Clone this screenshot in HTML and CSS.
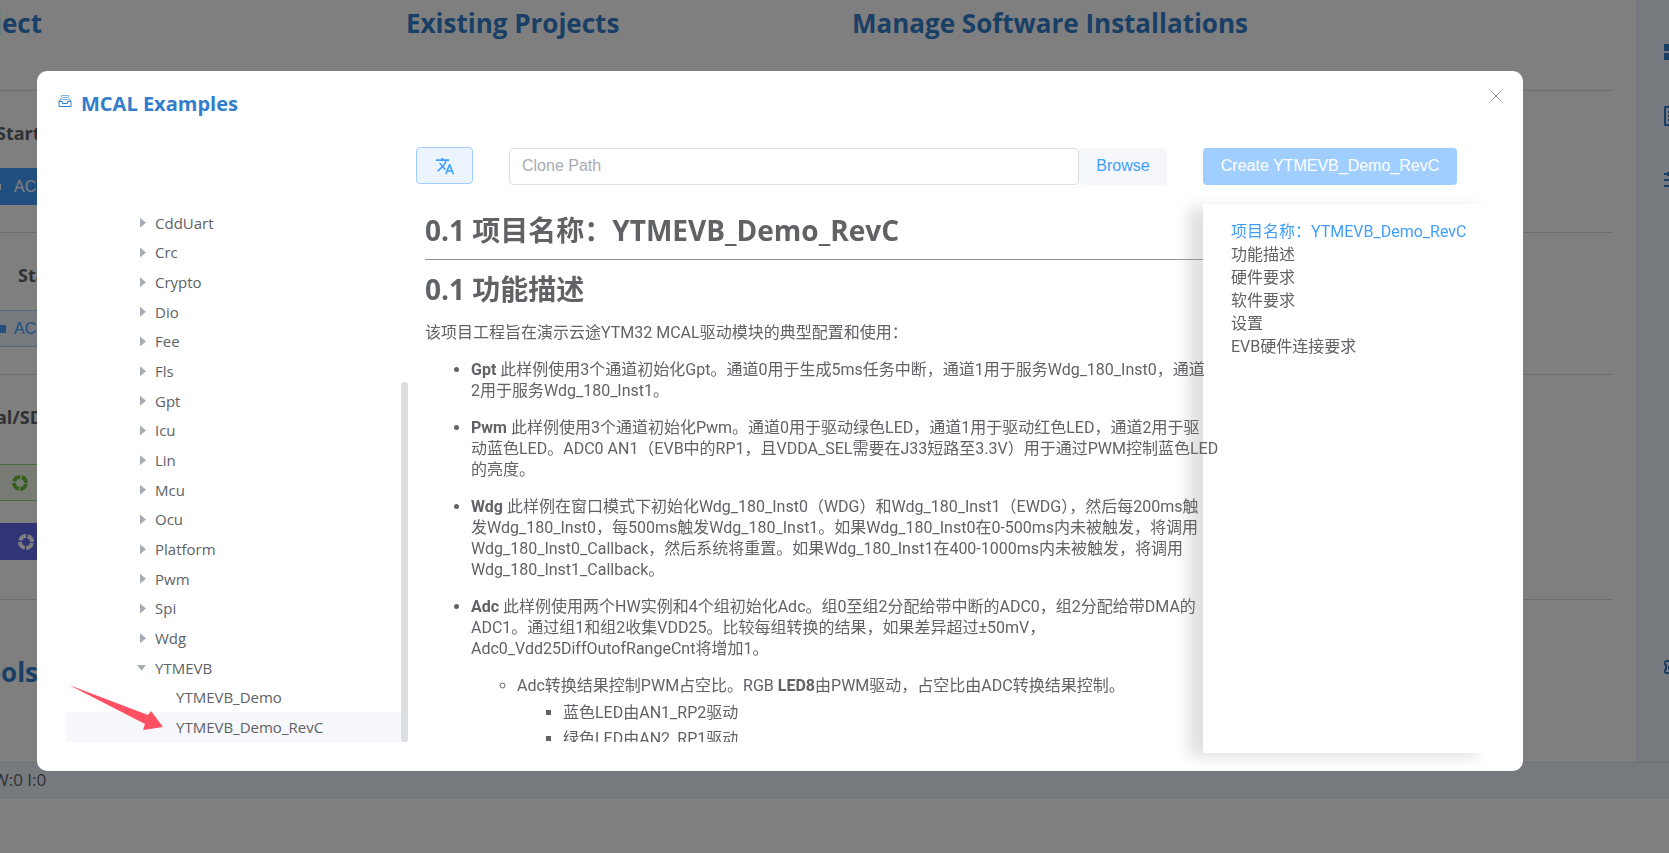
FILE: index.html
```html
<!DOCTYPE html>
<html lang="zh-CN">
<head>
<meta charset="utf-8">
<title>MCAL Examples</title>
<link rel="stylesheet" href="styles.css">
</head>
<body>
<div class="shell">
  <main class="home">
    <header class="home-head">
      <h2 class="col-new">Project</h2>
      <h2 class="col-existing">Existing Projects</h2>
      <h2 class="col-manage">Manage Software Installations</h2>
    </header>
    <section class="block">
      <h3 class="block-title">Start</h3>
      <button class="launch launch-primary" type="button"><span class="chip chip-small"></span>AC</button>
    </section>
    <section class="block">
      <h3 class="block-title indent">Start</h3>
      <button class="launch launch-plain" type="button"><span class="chip"></span>AC</button>
    </section>
    <section class="block block-tall">
      <h3 class="block-title">al/SDK</h3>
      <button class="launch launch-green" type="button" aria-label="Help">
        <svg class="ring" viewBox="0 0 16 16"><circle cx="8" cy="8" r="6"/></svg>
      </button>
      <button class="launch launch-purple" type="button" aria-label="Support">
        <svg class="ring" viewBox="0 0 16 16"><circle cx="8" cy="8" r="6"/></svg>
      </button>
    </section>
    <h2 class="tools">Tools</h2>
  </main>
  <aside class="rail">
    <svg class="rail-icon" viewBox="0 0 20 20"><path class="solid" d="M0 2h8v7H0zM0 11h8v7H0zM11 2h8v7h-8zM11 11h8v7h-8z"/></svg>
    <svg class="rail-icon" viewBox="0 0 20 20"><path d="M1 1h18v18H1zM4 6h12M4 10h12M4 14h12"/></svg>
    <svg class="rail-icon" viewBox="0 0 20 20"><path d="M0 4h20M0 10h20M0 16h20M4 2v4"/></svg>
    <svg class="rail-icon last" viewBox="0 0 20 20"><path d="M2 4h14v3l-2 3 2 3v3H2q-3-2 0-4v-4q-3-2 0-4M5 9v3"/></svg>
  </aside>
  <footer class="status">W:0 I:0</footer>
</div>

<div class="overlay">
  <section class="dialog" role="dialog" aria-labelledby="dialog-title">
    <header class="dialog-head">
      <svg class="box-icon" viewBox="0 0 14 14"><path d="M1 7.500h3.500v2h5v-2H13V12.500H1zM1 7.500 3 4.500M13 7.500 11 4.500"/><path class="faint" d="M3.500 3.500V1.500h7v2M3.500 5.500h7M4 3.500h6"/></svg>
      <h1 class="dialog-title" id="dialog-title">MCAL Examples</h1>
      <button class="close" type="button" aria-label="Close">
        <svg viewBox="0 0 12 12"><path d="M.5.5l11 11M11.500.5l-11 11"/></svg>
      </button>
    </header>

    <div class="toolbar">
      <button class="translate" type="button" aria-label="Translate">
        <svg viewBox="0 0 24 24"><path d="M12.870 15.070l-2.540-2.510.03-.03A17.520 17.520 0 0 0 14.070 6H17V4h-7V2H8v2H1v2h11.170C11.500 7.920 10.440 9.750 9 11.350 8.070 10.320 7.300 9.190 6.690 8h-2c.73 1.630 1.730 3.170 2.980 4.560l-5.090 5.020L4 19l5-5 3.110 3.110.76-2.040zM18.500 10h-2L12 22h2l1.120-3h4.750L21 22h2l-4.500-12zm-2.620 7l1.620-4.330L19.120 17h-3.240z"/></svg>
      </button>
      <div class="path-group">
        <input class="path" type="text" placeholder="Clone Path" aria-label="Clone Path">
        <button class="browse" type="button">Browse</button>
      </div>
      <button class="create" type="button">Create YTMEVB_Demo_RevC</button>
    </div>

    <div class="panes">
      <nav class="tree" aria-label="Examples">
        <ul class="tree-list">
          <li class="node">CddUart</li>
          <li class="node">Crc</li>
          <li class="node">Crypto</li>
          <li class="node">Dio</li>
          <li class="node">Fee</li>
          <li class="node">Fls</li>
          <li class="node">Gpt</li>
          <li class="node">Icu</li>
          <li class="node">Lin</li>
          <li class="node">Mcu</li>
          <li class="node">Ocu</li>
          <li class="node">Platform</li>
          <li class="node">Pwm</li>
          <li class="node">Spi</li>
          <li class="node">Wdg</li>
          <li class="node open">YTMEVB</li>
          <li class="node leaf">YTMEVB_Demo</li>
          <li class="node leaf selected">YTMEVB_Demo_RevC</li>
        </ul>
        <span class="thumb"></span>
        <svg class="pointer" viewBox="0 0 94 46"><path d="M0 0 79 30 82 26 94 42 74 45 76 39Z"/></svg>
      </nav>

      <article class="doc">
        <h2 class="doc-title">0.1 项目名称：YTMEVB_Demo_RevC</h2>
        <hr class="rule">
        <h2 class="doc-title">0.1 功能描述</h2>
        <p class="lead">该项目工程旨在演示云途YTM32 MCAL驱动模块的典型配置和使用：</p>
        <ul class="points">
          <li><strong>Gpt</strong> 此样例使用3个通道初始化Gpt。通道0用于生成5ms任务中断，通道1用于服务Wdg_180_Inst0，通道<br>2用于服务Wdg_180_Inst1。</li>
          <li><strong>Pwm</strong> 此样例使用3个通道初始化Pwm。通道0用于驱动绿色LED，通道1用于驱动红色LED，通道2用于驱<br>动蓝色LED。ADC0 AN1（EVB中的RP1，且VDDA_SEL需要在J33短路至3.3V）用于通过PWM控制蓝色LED<br>的亮度。</li>
          <li><strong>Wdg</strong> 此样例在窗口模式下初始化Wdg_180_Inst0（WDG）和Wdg_180_Inst1（EWDG），然后每200ms触<br>发Wdg_180_Inst0，每500ms触发Wdg_180_Inst1。如果Wdg_180_Inst0在0-500ms内未被触发，将调用<br>Wdg_180_Inst0_Callback，然后系统将重置。如果Wdg_180_Inst1在400-1000ms内未被触发，将调用<br>Wdg_180_Inst1_Callback。</li>
          <li><strong>Adc</strong> 此样例使用两个HW实例和4个组初始化Adc。组0至组2分配给带中断的ADC0，组2分配给带DMA的<br>ADC1。通过组1和组2收集VDD25。比较每组转换的结果，如果差异超过±50mV，<br>Adc0_Vdd25DiffOutofRangeCnt将增加1。
            <ul class="sub">
              <li>Adc转换结果控制PWM占空比。RGB <strong>LED8</strong>由PWM驱动，占空比由ADC转换结果控制。
                <ul class="subsub">
                  <li>蓝色LED由AN1_RP2驱动</li>
                  <li>绿色LED由AN2_RP1驱动</li>
                </ul>
              </li>
            </ul>
          </li>
        </ul>
      </article>

      <nav class="toc" aria-label="目录">
        <a class="toc-link current" href="#p1">项目名称：YTMEVB_Demo_RevC</a>
        <a class="toc-link" href="#p2">功能描述</a>
        <a class="toc-link" href="#p3">硬件要求</a>
        <a class="toc-link" href="#p4">软件要求</a>
        <a class="toc-link" href="#p5">设置</a>
        <a class="toc-link" href="#p6">EVB硬件连接要求</a>
      </nav>
    </div>
  </section>
</div>
</body>
</html>
```
FILE: styles.css
```css
* { box-sizing: border-box; }

body {
  margin: 0;
  height: 100vh;
  overflow: hidden;
  background: #fff;
  color: #606266;
  font-family: "Open Sans", "Noto Sans CJK SC", sans-serif;
  font-size: 15px;
}

h1, h2, h3, p, ul { margin: 0; padding: 0; }
button, input { font-family: "Liberation Sans", sans-serif; font-size: 16px; }
button { cursor: pointer; }

/* Page behind the dialog */
.shell {
  display: grid;
  height: 100vh;
  grid-template-columns: 1fr 33px;
  grid-template-rows: 1fr 36px;
  padding-bottom: 55px;
}
.home { min-width: 0; overflow: hidden; }
.home h2 { color: #337ecc; font-size: 26px; line-height: 46px; white-space: nowrap; }
.home-head {
  display: flex;
  height: 91px;
  margin-right: 23px;
  border-bottom: 1px solid #dcdfe6;
}
.col-new, .tools { display: flex; justify-content: flex-end; }
.col-new { flex: 0 0 42px; min-width: 0; }
.col-existing { flex: 0 0 446px; margin-left: 364px; }
.block {
  height: 142px;
  margin-right: 23px;
  padding-top: 28px;
  border-bottom: 1px solid #dcdfe6;
}
.block-tall { height: 225px; }
.block-title { margin-left: -4px; font-size: 18px; line-height: 28px; }
.indent { margin-left: 18px; }
.launch {
  display: flex;
  width: 160px;
  height: 37px;
  margin-top: 21px;
  padding: 0;
  align-items: center;
  border: 0;
}
.launch-primary { gap: 13px; background: #409eff; color: #fff; }
.launch-plain { gap: 8px; border: 1px solid #a0cfff; border-left: 0; background: #ecf5ff; color: #409eff; }
.chip { width: 6px; height: 8px; background: #409eff; }
.chip-small { width: 1px; height: 6px; background: #fff; }
.launch-green { padding: 0 12px; margin-top: 33px; border: 1px solid #95d475; border-left: 0; background: #f0f9eb; color: #67c23a; }
.launch-purple { padding: 0 18px; margin-top: 22px; background: #626aef; color: #fff; }
.ring { width: 16px; height: 16px; fill: none; stroke: currentColor; stroke-width: 4; stroke-dasharray: 8 1.420; stroke-dashoffset: -1; }
.home .tools { width: 38px; margin-top: 49px; }

.rail { display: flex; flex-direction: column; gap: 44px; padding: 42px 0 50px 28px; overflow: hidden; background: #ecf5ff; }
.rail-icon { flex: none; width: 20px; height: 20px; fill: none; stroke: #337ecc; stroke-width: 2; }
.rail-icon .solid { fill: #337ecc; stroke: none; }
.last { margin-top: auto; margin-bottom: 35px; }

.status {
  grid-column: 1 / -1;
  border: solid #dcdfe6;
  border-width: 1px 0;
  background: #ecf5ff;
  font-size: 17px;
  line-height: 34px;
  text-indent: -7px;
}

/* Dialog */
.overlay {
  position: fixed;
  inset: 0;
  display: flex;
  padding: 71px 146px 82px 37px;
  background: rgba(0, 0, 0, .5);
}
.dialog {
  display: flex;
  flex: 1;
  min-width: 0;
  flex-direction: column;
  border-radius: 10px;
  background: #fff;
}
.dialog-head { display: flex; height: 76px; padding: 18px 20px 0 21px; align-items: flex-start; }
.box-icon { width: 14px; height: 14px; margin: 5px 9px 0 0; fill: none; stroke: #337ecc; }
.faint { opacity: .6; }
.dialog-title { color: #337ecc; font-size: 20px; line-height: 30px; }
.close { width: 14px; height: 14px; margin: 0 0 0 auto; padding: 1px; border: 0; background: none; }
.close svg { display: block; width: 12px; height: 12px; fill: none; stroke: #909399; }

.toolbar { display: flex; padding: 0 66px 0 379px; }
.translate {
  display: grid;
  width: 57px;
  height: 37px;
  padding: 0;
  place-items: center;
  border: 1px solid #a0cfff;
  border-radius: 4px;
  background: #ecf5ff;
}
.translate svg { width: 22px; height: 20px; fill: #409eff; }
.path-group { display: flex; flex: 1; margin: 1px 36px 0; }
.path {
  flex: 1;
  min-width: 0;
  height: 37px;
  padding: 0 12px 2px;
  border: 1px solid #dcdfe6;
  border-radius: 4px;
}
.path::placeholder { color: #a8abb2; }
.browse { width: 88px; padding: 0 0 2px; border: 0; border-radius: 4px; background: #f5f7fa; color: #409eff; }
.create { width: 254px; height: 37px; margin-top: 1px; padding: 0 0 2px; border: 0; border-radius: 4px; background: #a0cfff; color: #fff; }

.panes { display: flex; flex: 1; min-height: 0; padding: 19px 30px 18px 29px; }

.tree { position: relative; display: flex; flex: 0 0 342px; margin: 4px 0 11px; }
.tree-list { display: grid; flex: 1; grid-auto-rows: 1fr; list-style: none; }
.node { display: flex; align-items: center; padding-left: 74px; }
.node::before {
  content: "";
  width: 6px;
  height: 10px;
  margin-right: 9px;
  background: #a8abb2;
  clip-path: polygon(0 0, 100% 50%, 0 100%);
}
.open { padding-left: 71px; }
.open::before { width: 9px; height: 6px; clip-path: polygon(0 0, 100% 0, 50% 100%); }
.leaf { padding-left: 110px; }
.leaf::before { display: none; }
.selected { background: #f5f7fa; }
.thumb { position: absolute; right: 0; bottom: 0; width: 7px; height: 360px; border-radius: 4px; background: #dddee0; }
.pointer { position: absolute; left: 3px; bottom: 11px; width: 94px; height: 46px; fill: #ff5161; }

.doc, .toc { font-family: Roboto, "Noto Sans CJK SC", sans-serif; font-size: 16px; white-space: nowrap; }
/* The text runs over the shadow of the contents panel */
.doc { position: relative; z-index: 1; flex: 1; min-width: 0; margin: 5px -16px 11px 17px; overflow: hidden; line-height: 21px; }
.doc-title { font-family: "Open Sans", "Noto Sans CJK SC", sans-serif; font-size: 28px; line-height: 42px; }
.rule { margin: 8px 16px 8px 0; border: 0; border-top: 1px solid #909399; }
.lead { margin-top: 12px; }
.points { margin-top: 16px; padding-left: 46px; }
.points > li { margin-bottom: 16px; }
.sub { margin-top: 16px; padding-left: 46px; }
.subsub { margin-top: 6px; padding-left: 46px; }
.subsub li { margin-bottom: 5px; }

.toc {
  position: relative;
  display: flex;
  flex: 0 0 290px;
  flex-direction: column;
  padding: 16px 0 0 28px;
  background: #fff;
  box-shadow: -15px 4px 14px rgba(0, 0, 0, .12);
}
.toc-link { color: #606266; line-height: 23px; text-decoration: none; }
.toc .current { color: #409eff; }
```
